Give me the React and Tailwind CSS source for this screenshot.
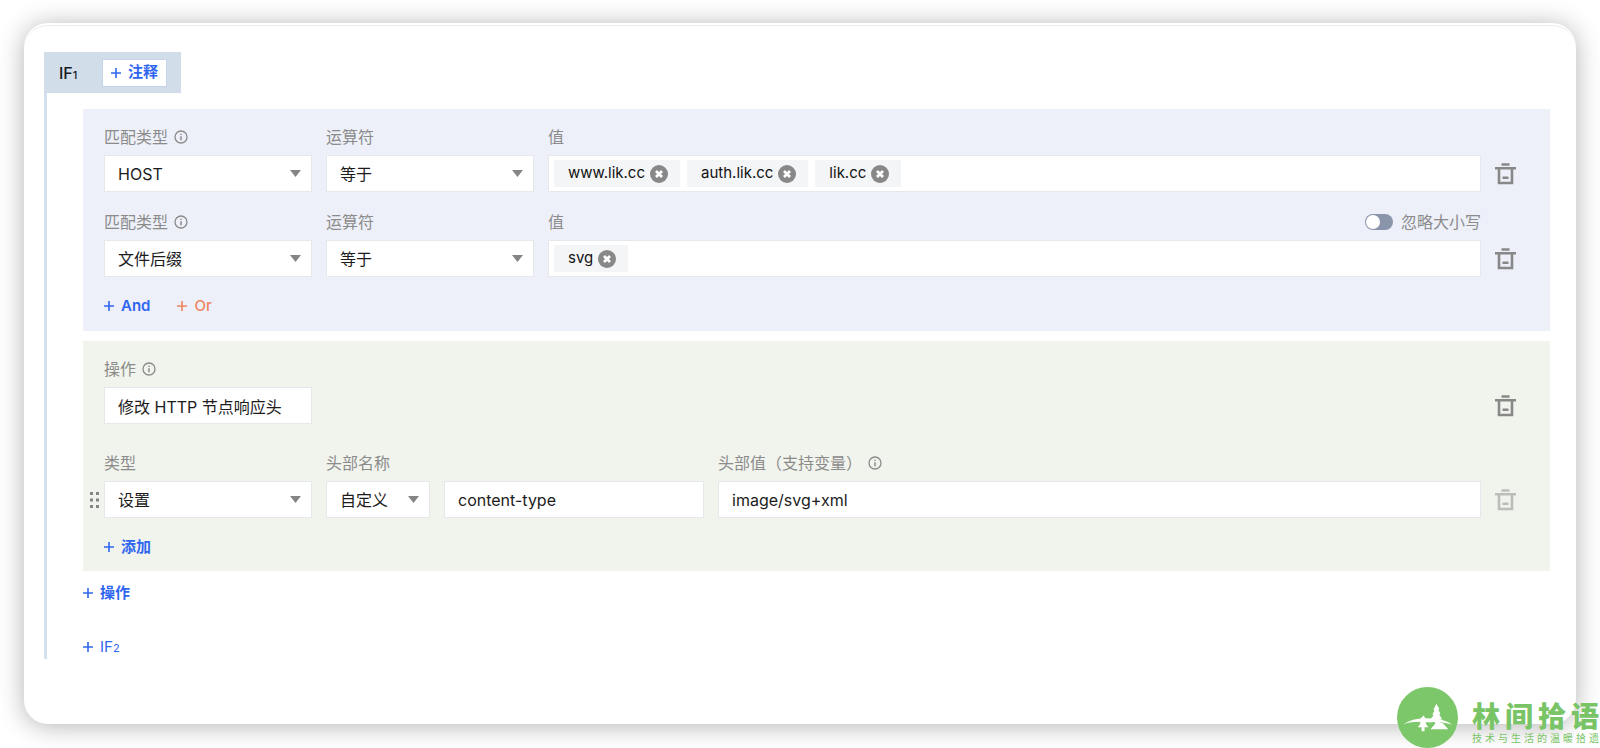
import { useState } from 'react';

const fieldClass = 'h-[37px] w-full border border-[#e6e9ec] bg-white px-[13px] text-base text-[#1c1c1c] outline-none';

function InfoIcon() {
  return (
    <svg className="size-[14px]" viewBox="0 0 14 14" fill="none" stroke="#8b8b8b" strokeWidth="1.3">
      <circle cx="7" cy="7" r="6" />
      <path d="M7 6.2v4M7 3.7v1.3" strokeWidth="1.5" />
    </svg>
  );
}

function Label({ htmlFor, info, children }) {
  return (
    <div className="flex h-6 items-center gap-[6px] text-base text-[#8b8b8b]">
      <label htmlFor={htmlFor}>{children}</label>
      {info && <InfoIcon />}
    </div>
  );
}

function Select({ id, options, className }) {
  return (
    <div className={`relative ${className || ''}`}>
      <select id={id} className={`${fieldClass} appearance-none`}>
        {options.map((o) => <option key={o}>{o}</option>)}
      </select>
      <svg className="pointer-events-none absolute top-[15px] right-[11px] h-[7px] w-[11px]" viewBox="0 0 11 7" fill="#858585">
        <path d="M0 0h11L5.5 7z" />
      </svg>
    </div>
  );
}

function Tags({ id, initial }) {
  const [tags, setTags] = useState(initial);
  return (
    <div className="flex h-[37px] items-center gap-[7px] border border-[#e6e9ec] bg-white px-[5px]">
      {tags.map((tag) => (
        <span key={tag} className="flex h-[27px] shrink-0 items-center gap-[5px] bg-[#f4f5f7] pr-3 pl-[14px] text-[15px] text-[#111]">
          {tag}
          <button type="button" aria-label={`删除 ${tag}`} onClick={() => setTags(tags.filter((t) => t !== tag))}>
            <svg className="size-[18px]" viewBox="0 0 18 18">
              <circle cx="9" cy="9" r="9" fill="#888" />
              <path d="M6 6l6 6M12 6l-6 6" stroke="#fff" strokeWidth="2.8" />
            </svg>
          </button>
        </span>
      ))}
      <input id={id} type="text" className="min-w-0 flex-1 bg-transparent text-[15px] outline-none" />
    </div>
  );
}

function TrashButton({ faded }) {
  return (
    <button type="button" aria-label="删除" className={`flex h-[37px] w-[21px] shrink-0 items-center ${faded ? 'opacity-50' : ''}`}>
      <svg className="h-[22px] w-[21px]" viewBox="0 0 21 22" fill="none" stroke="#888" strokeWidth="2.6">
        <path d="M6.5 1.5h8M0 5.2h21M4 5v15h13V5M7.5 14.8h6" />
      </svg>
    </button>
  );
}

function AddButton({ className, children }) {
  return (
    <button type="button" className={`flex h-6 items-center gap-[7px] text-[15px] ${className || 'font-semibold text-[#2f66f0]'}`}>
      <svg className="size-[10px]" viewBox="0 0 10 10" stroke="currentColor" strokeWidth="1.6">
        <path d="M5 0v10M0 5h10" />
      </svg>
      <span>{children}</span>
    </button>
  );
}

function Condition({ id, type, values, caseToggle }) {
  return (
    <div className="flex items-end gap-[14px]">
      <div className="flex w-[208px] shrink-0 flex-col gap-[6px]">
        <Label htmlFor={`${id}-type`} info>匹配类型</Label>
        <Select id={`${id}-type`} options={[type]} />
      </div>
      <div className="flex w-[208px] shrink-0 flex-col gap-[6px]">
        <Label htmlFor={`${id}-op`}>运算符</Label>
        <Select id={`${id}-op`} options={['等于', '不等于']} />
      </div>
      <div className="flex min-w-0 flex-1 flex-col gap-[6px]">
        <div className="flex items-center justify-between">
          <Label htmlFor={`${id}-value`}>值</Label>
          {caseToggle && (
            <label className="flex items-center gap-2 text-base text-[#8b8b8b]">
              <input type="checkbox" role="switch" className="peer sr-only" />
              <span className="flex h-4 w-7 items-center rounded-full bg-[#8a94ab] px-px peer-checked:justify-end peer-checked:bg-[#2f66f0]">
                <span className="size-[14px] rounded-full bg-white" />
              </span>
              忽略大小写
            </label>
          )}
        </div>
        <Tags id={`${id}-value`} initial={values} />
      </div>
      <TrashButton />
    </div>
  );
}

function Watermark() {
  return (
    <div className="absolute right-0 bottom-0 flex items-center gap-[14px] overflow-hidden text-[#79c466]">
      <svg className="size-[61px] shrink-0" viewBox="0 0 62 62">
        <circle cx="31" cy="31" r="31" fill="#7cc769" />
        <path d="M6 38c8-5 17-7 27-6 9 0 17 2 23 6-8-2-15-3-22-2-10-1-19-1-28 2z" fill="#fff" />
        <path d="M40 17l3 5-1 1 2 4-1 1 3 5h-3l1 3 3 1 5 6H34l5-6-2-3h-4l4-5-1-1 2-4-1-1z" fill="#fff" />
        <path d="M27 29l2 3-1 1 2 4-1 0 3 4h-4v4h-3v-4h-4l3-4h-1l2-4-1-1z" fill="#fff" />
      </svg>
      <div className="flex w-[128px] flex-col pt-[10px]">
        <div className="flex gap-[5px] text-[28px] leading-[30px] font-black">
          {['林', '间', '拾', '语'].map((c) => <span key={c}>{c}</span>)}
        </div>
        <div className="flex gap-[3px] text-[10px] leading-3">
          {['技', '术', '与', '生', '活', '的', '温', '暖', '拾', '遗'].map((c) => <span key={c}>{c}</span>)}
        </div>
      </div>
    </div>
  );
}

export default function App() {
  return (
    <div className="relative min-h-screen bg-white px-6 pt-[23px] pb-6 font-['Inter','Noto_Sans_CJK_SC',sans-serif]">
      <main className="rounded-3xl bg-white pt-[2px] shadow-[0_2px_26px_rgba(0,0,0,0.3)]">
        <div className="rounded-3xl border-t border-[#ececec] px-5 pt-[26px] pb-[65px]">
          <div className="flex h-[41px] w-[137px] items-center justify-between bg-[#d2ddea] pr-[14px] pl-[15px]">
            <span className="text-base font-medium text-[#151a22]">IF<span className="text-[11px]">1</span></span>
            <div className="border border-[#c5d4ea] bg-white px-2 py-px">
              <AddButton>注释</AddButton>
            </div>
          </div>

          <div className="border-l-3 border-[#d3dfee] pt-4 pr-[6px] pl-9">
            <section className="bg-[#edf0f8] pt-4 pr-[34px] pb-[13px] pl-[21px]">
              <div className="flex flex-col gap-[18px]">
                <Condition id="host" type="HOST" values={['www.lik.cc', 'auth.lik.cc', 'lik.cc']} />
                <Condition id="ext" type="文件后缀" values={['svg']} caseToggle />
              </div>
              <div className="mt-[17px] flex gap-[27px]">
                <AddButton>And</AddButton>
                <AddButton className="font-medium text-[#ee8560]">Or</AddButton>
              </div>
            </section>

            <section className="mt-[10px] bg-[#f1f4ed] pt-4 pr-[34px] pb-3 pl-[21px]">
              <div className="flex items-end justify-between">
                <div className="flex w-[208px] flex-col gap-[6px]">
                  <Label htmlFor="action" info>操作</Label>
                  <input id="action" type="text" defaultValue="修改 HTTP 节点响应头" className={fieldClass} />
                </div>
                <TrashButton />
              </div>

              <div className="mt-[27px] -ml-[14px] flex items-end">
                <div className="flex h-[37px] w-[14px] shrink-0 items-center">
                  <svg className="h-4 w-[9px]" viewBox="0 0 9 16" fill="#858585">
                    <path d="M0 0h3v3H0zM6 0h3v3H6zM0 6.5h3v3H0zM6 6.5h3v3H6zM0 13h3v3H0zM6 13h3v3H6z" />
                  </svg>
                </div>
                <div className="flex min-w-0 flex-1 items-end gap-[14px]">
                  <div className="flex w-[208px] shrink-0 flex-col gap-[6px]">
                    <Label htmlFor="op-type">类型</Label>
                    <Select id="op-type" options={['设置', '删除']} />
                  </div>
                  <div className="flex w-[378px] shrink-0 flex-col gap-[6px]">
                    <Label htmlFor="header-kind">头部名称</Label>
                    <div className="flex gap-[14px]">
                      <Select id="header-kind" options={['自定义']} className="w-[104px] shrink-0" />
                      <input type="text" aria-label="头部名称" defaultValue="content-type" className={fieldClass} />
                    </div>
                  </div>
                  <div className="flex min-w-0 flex-1 flex-col gap-[6px]">
                    <Label htmlFor="header-value" info>头部值（支持变量）</Label>
                    <input id="header-value" type="text" defaultValue="image/svg+xml" className={fieldClass} />
                  </div>
                  <TrashButton faded />
                </div>
              </div>

              <div className="mt-[17px]">
                <AddButton>添加</AddButton>
              </div>
            </section>

            <div className="mt-[10px]">
              <AddButton>操作</AddButton>
            </div>
            <div className="mt-[30px]">
              <AddButton className="text-[#2f66f0]">IF<span className="text-[11px]">2</span></AddButton>
            </div>
          </div>
        </div>
      </main>
      <Watermark />
    </div>
  );
}
